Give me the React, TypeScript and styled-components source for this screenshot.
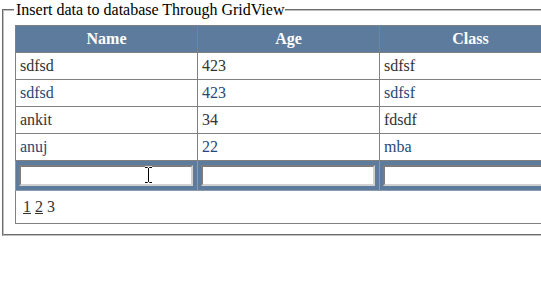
import styled, { createGlobalStyle } from "styled-components";

interface Student {
  name: string;
  age: string;
  className: string;
}

const students: Student[] = [
  { name: "sdfsd", age: "423", className: "sdfsf" },
  { name: "sdfsd", age: "423", className: "sdfsf" },
  { name: "ankit", age: "34", className: "fdsdf" },
  { name: "anuj", age: "22", className: "mba" },
];

const GlobalStyle = createGlobalStyle`
  html, body {
    margin: 0;
    overflow: hidden;
    background: #ffffff;
  }
  body {
    font-family: "Liberation Serif", "Times New Roman", serif;
    font-size: 16px;
  }
`;

const Page = styled.div`
  position: relative;
  font-family: "Liberation Serif", "Times New Roman", serif;
  font-size: 16px;
`;

const Frame = styled.fieldset`
  margin: 0 0 0 2px;
  border: 2px groove #c0c0c0;
  padding: 6px 12px 10px 11px;
  min-width: max-content;
`;

const Legend = styled.legend`
  padding: 0 1px 0 2px;
  margin-left: -1px;
  color: #000000;
  font-family: "Liberation Serif", "Times New Roman", serif;
  font-size: 16px;
  line-height: 19px;
`;

const Grid = styled.table`
  border-collapse: collapse;
  border: 1px solid #808080;
  color: #333333;
  font-family: "Liberation Serif", "Times New Roman", serif;
  font-size: 16px;
  line-height: 18px;
`;

const HeadCell = styled.th`
  width: 173px;
  padding: 4px;
  border: 1px solid #808080;
  background: #5d7b9d;
  color: #ffffff;
  font-weight: bold;
  text-align: center;
`;

const Row = styled.tr<{ $alt?: boolean }>`
  color: ${(p) => (p.$alt ? "#284775" : "#333333")};
  background: #ffffff;
`;

const Cell = styled.td`
  padding: 4px;
  border: 1px solid #808080;
  text-align: left;
`;

const EditCell = styled.td`
  padding: 4px 4px 4px 3px;
  border: 1px solid #8a9bb0;
  background: #5d7b9d;
`;

const EditInput = styled.input`
  display: block;
  box-sizing: border-box;
  width: 174px;
  height: 21px;
  margin: 0;
  padding: 1px 2px;
  border: 2px inset #d0d0d0;
  background: #ffffff;
  font-family: "Liberation Sans", Arial, sans-serif;
  font-size: 13px;
`;

const PagerCell = styled.td`
  padding: 4px;
  border: 1px solid #808080;
`;

const Pager = styled.table`
  border-spacing: 2px;
  font: inherit;
  color: #333333;
`;

const PageItem = styled.td`
  padding: 1px;
`;

const PageLink = styled.a`
  color: #333333;
  text-decoration: underline;
  cursor: pointer;
`;

const Cursor = styled.svg`
  position: absolute;
  left: 144px;
  top: 166px;
  pointer-events: none;
`;

export default function App() {
  return (
    <Page>
      <GlobalStyle />
      <Frame>
        <Legend>Insert data to database Through GridView</Legend>
        <Grid>
          <thead>
            <tr>
              <HeadCell>Name</HeadCell>
              <HeadCell>Age</HeadCell>
              <HeadCell>Class</HeadCell>
            </tr>
          </thead>
          <tbody>
            {students.map((s, i) => (
              <Row key={i} $alt={i % 2 === 1}>
                <Cell>{s.name}</Cell>
                <Cell>{s.age}</Cell>
                <Cell>{s.className}</Cell>
              </Row>
            ))}
            <tr>
              <EditCell>
                <EditInput type="text" />
              </EditCell>
              <EditCell>
                <EditInput type="text" />
              </EditCell>
              <EditCell>
                <EditInput type="text" />
              </EditCell>
            </tr>
            <tr>
              <PagerCell colSpan={3}>
                <Pager>
                  <tbody>
                    <tr>
                      <PageItem>
                        <PageLink>1</PageLink>
                      </PageItem>
                      <PageItem>
                        <PageLink>2</PageLink>
                      </PageItem>
                      <PageItem>3</PageItem>
                    </tr>
                  </tbody>
                </Pager>
              </PagerCell>
            </tr>
          </tbody>
        </Grid>
      </Frame>
      <Cursor width="9" height="18" viewBox="0 0 9 18">
        <path
          d="M1 1.5h2.5L4.5 2.5L5.5 1.5H8M4.5 2.5V15.5M1 16.5h2.5L4.5 15.5L5.5 16.5H8"
          fill="none"
          stroke="#ffffff"
          strokeWidth="2.5"
        />
        <path
          d="M1 1.5h2.5L4.5 2.5L5.5 1.5H8M4.5 2.5V15.5M1 16.5h2.5L4.5 15.5L5.5 16.5H8"
          fill="none"
          stroke="#000000"
          strokeWidth="1"
        />
      </Cursor>
    </Page>
  );
}
